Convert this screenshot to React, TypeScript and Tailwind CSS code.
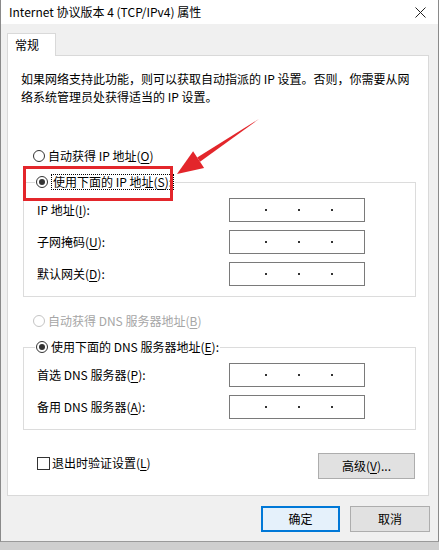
import React from "react";

const FONT = "font-['Noto_Sans_CJK_SC','Microsoft_YaHei',sans-serif]";

function Radio({ checked, disabled }: { checked?: boolean; disabled?: boolean }) {
  return (
    <span
      className={`flex h-[12px] w-[12px] shrink-0 items-center justify-center rounded-full border bg-white ${
        disabled ? "border-[#c4c4c4]" : "border-[#333333]"
      }`}
    >
      {checked && <span className="h-[6px] w-[6px] rounded-full bg-[#333333]" />}
    </span>
  );
}

function IpInput() {
  return (
    <div className="flex h-[24px] w-[136px] items-center gap-[31px] border border-[#7a7a7a] bg-white pl-[35px]">
      <span className="h-[2px] w-[2px] bg-[#333333]" />
      <span className="h-[2px] w-[2px] bg-[#333333]" />
      <span className="h-[2px] w-[2px] bg-[#333333]" />
    </div>
  );
}

function Key({ k }: { k: string }) {
  return <span className="underline underline-offset-2">{k}</span>;
}

function FieldRow({ label }: { label: React.ReactNode }) {
  return (
    <div className="flex items-center">
      <div className="w-[192px] leading-[16px]">{label}</div>
      <IpInput />
    </div>
  );
}

export default function App() {
  return (
    <div className={`relative h-[550px] w-[439px] overflow-hidden bg-[#cfcfcf] text-[12px] text-black ${FONT}`}>
      <div className="flex h-[542px] w-[439px] flex-col border-x border-b border-x-[#8a8a8a] border-b-[#9a9a9a] bg-[#f0f0f0]">
        {/* title bar */}
        <div className="flex h-[24px] items-center justify-between bg-white pl-[8px] pr-[12px]">
          <span className="leading-[16px]">Internet 协议版本 4 (TCP/IPv4) 属性</span>
          <svg width="11" height="11" viewBox="0 0 11 11">
            <path d="M0.5 0.5 L10.5 10.5 M10.5 0.5 L0.5 10.5" stroke="#222" strokeWidth="1" />
          </svg>
        </div>

        <div className="flex flex-col px-[6px] pt-[9px]">
          <div className="relative z-10 -mb-px flex h-[23px] w-[49px] items-center border border-b-0 border-[#d9d9d9] bg-white pl-[7px]">
            常规
          </div>
          <div className="flex h-[441px] w-[422px] flex-col border border-[#d9d9d9] bg-white">
            <div className="mt-[14px] pl-[13px] leading-[18px]">
              <div className="whitespace-nowrap">如果网络支持此功能，则可以获取自动指派的 IP 设置。否则，你需要从网</div>
              <div className="whitespace-nowrap">络系统管理员处获得适当的 IP 设置。</div>
            </div>

            <div className="mt-[42px] flex items-center gap-[3px] pl-[25px] leading-[16px]">
              <Radio />
              <span>
                自动获得 IP 地址(<Key k="O" />)
              </span>
            </div>

            <fieldset className="ml-[15px] mt-[10px] w-[393px] border border-[#dcdcdc] pb-[10px] pl-[13px]">
              <legend className="-ml-[2px] flex items-center gap-[3px] bg-white px-[1px] leading-[16px]">
                <Radio checked />
                <span className="border border-dotted border-black px-[1px] leading-[14px]">
                  使用下面的 IP 地址(<Key k="S" />):
                </span>
              </legend>
              <div className="mt-[8px] flex flex-col gap-[8px]">
                <FieldRow label={<>IP 地址(<Key k="I" />):</>} />
                <FieldRow label={<>子网掩码(<Key k="U" />):</>} />
                <FieldRow label={<>默认网关(<Key k="D" />):</>} />
              </div>
            </fieldset>

            <div className="mt-[16px] flex items-center gap-[3px] pl-[25px] leading-[16px] text-[#a6a6a6]">
              <Radio disabled />
              <span>
                自动获得 DNS 服务器地址(<Key k="B" />)
              </span>
            </div>

            <fieldset className="ml-[15px] mt-[10px] w-[393px] border border-[#dcdcdc] pb-[10px] pl-[13px]">
              <legend className="-ml-[2px] flex items-center gap-[3px] bg-white px-[1px] leading-[16px]">
                <Radio checked />
                <span>
                  使用下面的 DNS 服务器地址(<Key k="E" />):
                </span>
              </legend>
              <div className="mt-[8px] flex flex-col gap-[8px]">
                <FieldRow label={<>首选 DNS 服务器(<Key k="P" />):</>} />
                <FieldRow label={<>备用 DNS 服务器(<Key k="A" />):</>} />
              </div>
            </fieldset>

            <div className="mt-[23px] flex items-start justify-between pl-[29px] pr-[13px]">
              <div className="mt-[2px] flex items-center gap-[2px] leading-[16px]">
                <span className="h-[13px] w-[13px] border border-[#333333] bg-white" />
                <span>
                  退出时验证设置(<Key k="L" />)
                </span>
              </div>
              <button className="flex h-[26px] w-[97px] items-center justify-center border border-[#adadad] bg-[#e1e1e1]">
                高级(<Key k="V" />)...
              </button>
            </div>
          </div>

          <div className="mt-[10px] flex justify-end gap-[10px] pr-[2px]">
            <button className="flex h-[26px] w-[79px] items-center justify-center border-2 border-[#0078d7] bg-[#e5f1fb]">
              确定
            </button>
            <button className="flex h-[26px] w-[80px] items-center justify-center border border-[#adadad] bg-[#e1e1e1]">
              取消
            </button>
          </div>
        </div>
      </div>

      {/* annotation */}
      <div className="absolute left-[23px] top-[166px] h-[35px] w-[150px] border-[3px] border-[#e3262b]" />
      <svg className="absolute left-0 top-0" width="439" height="550" viewBox="0 0 439 550">
        <polygon points="259,119 200,161.7 197.2,157.5" fill="#e3262b" />
        <polygon points="177,174 204.1,167.9 193.1,151.3" fill="#e3262b" />
      </svg>
    </div>
  );
}
